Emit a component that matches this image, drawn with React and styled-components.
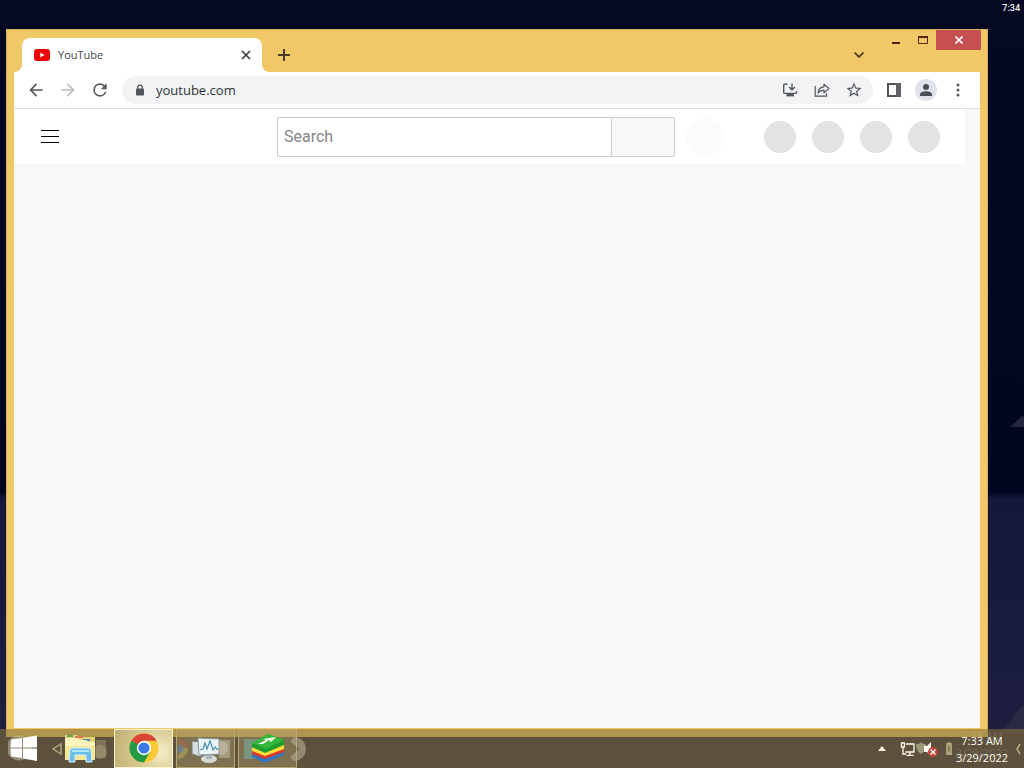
import React from "react";
import styled, { createGlobalStyle } from "styled-components";

const GlobalStyle = createGlobalStyle`
  * { box-sizing: border-box; }
  body { margin: 0; font-family: "Open Sans", "Noto Sans", sans-serif; }
  button, input { font: inherit; color: inherit; }
  svg { display: block; flex: none; }
`;

const Desktop = styled.div`
  min-height: 100vh;
  display: flex;
  flex-direction: column;
  background: linear-gradient(#050922 0, #02061f 55%, #02051e 64%, #15183a 65%, #1a1c3f 85%, #20213f 100%);
  position: relative;
`;

const Shard = styled.svg`
  position: absolute;
  right: 0;
  top: ${(p) => p.$top};
`;

const StatusBar = styled.header`
  height: 29px;
  display: flex;
  justify-content: flex-end;
  padding: 2px 4px 0;
  color: #f3f4f8;
  font: 500 9px/12px Roboto, sans-serif;
`;

const BrowserWindow = styled.main`
  flex: 1;
  display: flex;
  flex-direction: column;
  margin: 0 36px 0 6px;
  padding: 0 7px 9px;
  background: #f0c868;
  border: 1px solid #d6b05b;
  border-bottom: 0;
  position: relative;
`;

const TitleBar = styled.div`
  height: 42px;
  display: flex;
  align-items: flex-end;
  margin-right: -1px;
  padding-left: 8px;
`;

const Tab = styled.div`
  width: 240px;
  height: 34px;
  display: flex;
  align-items: center;
  padding: 0 8px 0 12px;
  gap: 8px;
  border-radius: 8px 8px 0 0;
  background: #fff;
  color: #45474a;
  font-size: 11px;
  line-height: 16px;
  position: relative;

  &::before, &::after {
    content: "";
    position: absolute;
    bottom: 0;
    width: 8px;
    height: 8px;
  }
  &::before { left: -8px; background: radial-gradient(circle at 0 0, transparent 8px, #fff 8px); }
  &::after { right: -8px; background: radial-gradient(circle at 100% 0, transparent 8px, #fff 8px); }
`;

const TabTitle = styled.span`
  flex: 1;
`;

const IconButton = styled.button`
  width: ${(p) => p.$w || 28}px;
  height: ${(p) => p.$h || 28}px;
  display: flex;
  flex: none;
  align-items: center;
  justify-content: center;
  border: 0;
  padding: 0;
  border-radius: 50%;
  background: none;
  color: ${(p) => p.$color || "#55585c"};
`;

const NewTab = styled(IconButton)`
  margin-left: 8px;
`;

const WindowControls = styled.div`
  align-self: flex-start;
  display: flex;
  align-items: flex-start;
  margin-left: auto;
`;

const TabSearch = styled(IconButton)`
  margin: 11px 9px 0 0;
`;

const ControlButton = styled(IconButton)`
  border-radius: 0;
  background: ${(p) => p.$bg || "none"};
`;

const Toolbar = styled.div`
  display: flex;
  align-items: center;
  height: 37px;
  gap: 4px;
  padding: 0 8px;
  background: #fff;
  border-bottom: 1px solid #dcdee1;
`;

const AddressBar = styled.div`
  flex: 1;
  min-width: 0;
  height: 28px;
  display: flex;
  align-items: center;
  gap: 4px;
  margin: 0 3px 0 4px;
  padding: 0 5px 0 13px;
  border-radius: 14px;
  background: #f1f3f4;
`;

const AddressInput = styled.input`
  flex: 1;
  min-width: 0;
  margin-left: 7px;
  padding: 0;
  border: 0;
  outline: 0;
  background: none;
  color: #303236;
  font-size: 13px;
  line-height: 20px;
`;

const Avatar = styled(IconButton)`
  background: #dfe2ea;
  background-clip: content-box;
  padding: 3px;
`;

const Page = styled.section`
  flex: 1;
  padding-right: 15px;
  background: #f8f8f8;
`;

const Masthead = styled.div`
  display: grid;
  grid-template-columns: 236px 1fr auto;
  align-items: center;
  height: 55px;
  padding: 0 25px 0 27px;
  background: #fff;
`;

const Burger = styled(IconButton)`
  width: 18px;
  color: #030303;
`;

const SearchForm = styled.form`
  display: flex;
  align-items: center;
  min-width: 0;
  margin-right: 40px;
`;

const SearchInput = styled.input`
  flex: 1;
  min-width: 0;
  height: 40px;
  padding: 0 6px;
  border: 1px solid #c9c9c9;
  border-right: 0;
  border-radius: 2px 0 0 2px;
  outline: 0;
  background: #fff;
  font: 16px/24px Roboto, sans-serif;
  &::placeholder { color: #858585; opacity: 1; }
`;

const SearchButton = styled.button`
  width: 64px;
  height: 40px;
  border: 1px solid #cdcdcd;
  border-radius: 0 2px 2px 0;
  background: #f8f8f8;
`;

const VoiceButton = styled(IconButton)`
  margin-left: 11px;
  background: #fbfbfb;
`;

const Placeholders = styled.div`
  display: flex;
  gap: 16px;
`;

const Dot = styled.span`
  width: 32px;
  height: 32px;
  border-radius: 50%;
  background: #e3e3e3;
`;

const Taskbar = styled.footer`
  height: 39px;
  display: flex;
  align-items: center;
  margin-top: -8px;
  padding: 0 0 0 8px;
  background: rgba(135, 115, 62, 0.6);
  position: relative;
`;

const TaskApps = styled.div`
  display: flex;
  align-items: center;
  gap: 3px;
  margin-left: 6px;
`;

const TaskButton = styled.button`
  width: ${(p) => p.$w || 59}px;
  height: 39px;
  display: flex;
  align-items: center;
  padding: 0 0 2px;
  border: ${(p) => (p.$plain ? "0" : `1px solid ${p.$active ? "#fdf6d2" : "#b9a873"}`)};
  background: ${(p) =>
    p.$active
      ? "radial-gradient(circle at 80% 60%, #f6edc8, #d8c98f 50%, #bfae74)"
      : p.$plain
        ? "none"
        : "rgba(180, 160, 105, 0.4)"};
`;

const Overflow = styled.svg`
  margin-left: -7px;
  position: relative;
`;

const Tray = styled.div`
  display: flex;
  align-items: center;
  margin-left: auto;
`;

const TrayIcons = styled.div`
  display: flex;
  align-items: center;
  margin-left: 13px;
`;

const Clock = styled.time`
  width: 60px;
  color: #fffdf2;
  font-size: 11px;
  line-height: 17px;
  padding-top: 1px;
  text-align: center;
  white-space: nowrap;
  text-shadow: 0 -5px 0 rgba(225, 215, 180, 0.2);
`;

const Mat = ({ d, size = 20 }) => (
  <svg width={size} height={size} viewBox="0 0 24 24" fill="currentColor" aria-hidden="true">
    <path d={d} />
  </svg>
);

const BACK = "M20 11H7.8l5.6-5.6L12 4l-8 8 8 8 1.4-1.4L7.8 13H20z";
const FORWARD = "M4 11h12.2l-5.6-5.6L12 4l8 8-8 8-1.4-1.4 5.6-5.6H4z";
const RELOAD =
  "M17.65 6.35A7.95 7.95 0 0 0 12 4a8 8 0 1 0 7.73 10h-2.08A6 6 0 1 1 12 6c1.66 0 3.14.69 4.22 1.78L13 11h7V4z";
const STAR =
  "M22 9.24l-7.19-.62L12 2 9.19 8.63 2 9.24l5.46 4.73L5.82 21 12 17.27 18.18 21l-1.63-7.03zM12 15.4l-3.76 2.27 1-4.28-3.32-2.88 4.38-.38L12 6.1l1.71 4.04 4.38.38-3.32 2.88 1 4.28z";

const YouTubeIcon = () => (
  <svg width="16" height="16" viewBox="0 0 16 16" aria-hidden="true">
    <rect y="2" width="16" height="12" rx="3" fill="#f00505" />
    <path d="M6.3 5.6v4.800L10.500 8z" fill="#fff" />
  </svg>
);

const LockIcon = () => (
  <svg width="10" height="12" viewBox="0 0 10 12" aria-hidden="true">
    <path d="M2.7 5V3.400a2.300 2.300 0 0 1 4.600 0V5" fill="none" stroke="#54575a" strokeWidth="1.300" />
    <rect x="1" y="4.500" width="8" height="7" rx="1" fill="#54575a" />
  </svg>
);

const InstallIcon = () => (
  <svg width="16" height="16" viewBox="0 0 16 16" fill="none" stroke="currentColor" strokeWidth="1.400" aria-hidden="true">
    <path d="M5.500 2.200H2.700a1 1 0 0 0-1 1v7.200a1 1 0 0 0 1 1h10.800a1 1 0 0 0 1-1V9M10 1.500v6M7.200 5.100 10 8l2.800-2.900" />
    <path d="M4.500 13h7.500" strokeWidth="2.800" />
  </svg>
);

const ShareIcon = () => (
  <svg width="16" height="16" viewBox="0 0 16 16" fill="none" stroke="currentColor" strokeWidth="1.200" aria-hidden="true">
    <path d="M1.200 4v10.200h11.300v-3" />
    <path d="M4 11c.4-4 2.400-6 6-6.200V2.200L15 6.500l-5 4.300V8.200C7.300 8.200 5.500 9 4 11z" strokeLinejoin="round" />
  </svg>
);

const PanelIcon = () => (
  <svg width="14" height="14" viewBox="0 0 14 14" aria-hidden="true">
    <rect x="1" y="1" width="12" height="12" fill="none" stroke="#525457" strokeWidth="2" />
    <path d="M9 0h5v14H9z" fill="#5f6164" />
  </svg>
);

const PersonIcon = () => (
  <svg width="12" height="12" viewBox="0 0 12 12" fill="#4b4f5b" aria-hidden="true">
    <circle cx="6" cy="3" r="3" />
    <path d="M0 12v-1.500C0 8.300 3 7.300 6 7.300s6 1 6 3.200V12z" />
  </svg>
);

const StartIcon = () => (
  <svg width="30" height="28" viewBox="0 0 30 28" aria-hidden="true">
    <circle cx="11" cy="14" r="12.500" fill="#cfc7ae" opacity=".5" />
    <path d="M3 5.500 14 4v9.500H2.500zM15 3.800 29 1.500v12H15zM2.500 14.500H14V24L3 22.500zM15 14.500h14V27l-14-2.500z" fill="#fff" />
  </svg>
);

const FolderIcon = () => (
  <svg width="50" height="32" viewBox="0 0 50 32" aria-hidden="true">
    <path d="M34 8h10v18H34z" fill="#b7a879" opacity=".4" />
    <circle cx="38" cy="20" r="7" fill="#c1b58c" opacity=".35" />
    <path d="M3 3h12l2 2h16v22H3z" fill="#e6d277" />
    <path d="M5 3h6v2H5z" fill="#5aa75b" />
    <path d="M13 4h8v2h-8z" fill="#d87a55" />
    <path d="M21 7h7v2h-7z" fill="#498abd" />
    <path d="M3 6h12l3 2h6l3 2h6v18H3z" fill="#fdf4bd" />
    <path d="M3 14h30v14H3z" fill="#f6e797" />
    <path d="M7 30 8 18q0-2 3-2h15q3 0 3 2l1 12h-6v-7H13v7z" fill="#6cbde9" stroke="#d6f2fb" />
    <path d="M10 19h17" stroke="#b8e7fa" strokeWidth="2" />
  </svg>
);

const ChromeIcon = () => (
  <svg width="57" height="36" viewBox="0 0 57 36" aria-hidden="true">
    <circle cx="29" cy="18" r="14.500" fill="#fbc934" />
    <path d="M29 18 16.400 10.750A14.500 14.500 0 0 0 29 32.500l6.300-10.900z" fill="#249a45" />
    <path d="M29 18 16.400 10.750a14.500 14.500 0 0 1 25.200 0H29z" fill="#db4437" />
    <path d="m16.400 10.750 6.300 10.900L29 18z" fill="#249a45" />
    <circle cx="29" cy="18" r="7.200" fill="#fff" />
    <circle cx="29" cy="18" r="5.600" fill="#3a7be5" />
  </svg>
);

const MonitorIcon = () => (
  <svg width="57" height="36" viewBox="0 0 57 36" aria-hidden="true">
    <path d="M0 8a11 11 0 0 1 11 10H4z" fill="#c66b4d" opacity=".35" />
    <path d="M0 29a11 11 0 0 0 11-11H5z" fill="#c3b259" opacity=".5" />
    <circle cx="3" cy="19" r="4" fill="#5986b0" opacity=".5" />
    <path d="M42 10h11v18H42z" fill="#d3cdb7" opacity=".45" />
    <circle cx="44" cy="18" r="7" fill="#d8d3c3" opacity=".4" />
    <path d="m15 11 9 1v15l-9-3z" fill="#d7dddd" stroke="#737a7a" />
    <ellipse cx="32" cy="29" rx="8" ry="4" fill="#d5dad6" />
    <path d="M29 24h6v5h-6z" fill="#a9b4b6" />
    <path d="m21 8 21 1v15l-20 1z" fill="#edf4f7" stroke="#899aa3" />
    <path d="m23 20 3-1 2-6 2 6 3-8 3 9 2-3 3 3" fill="none" stroke="#438fae" strokeWidth="1.200" />
  </svg>
);

const StackIcon = () => (
  <svg width="57" height="36" viewBox="0 0 57 36" aria-hidden="true">
    <path d="M5 9h14v20H5z" fill="#76a99a" opacity=".65" />
    <path d="m13 24 19-8 13 5v4l-19 8-13-6z" fill="#3277bd" />
    <path d="m13 21 19-8 13 5v4l-19 7-13-5z" fill="#dc3529" />
    <path d="m13 18 19-8 13 5v4l-19 7-13-5z" fill="#ffdc38" />
    <path d="m13 13 16-9 16 6v5l-19 8-13-6z" fill="#1c9d2d" />
    <path d="m13 13 16-9 16 6-18 9z" fill="#35b739" />
    <path d="m19 14 8-4-3-1 13-2-5 5-2-2-6 4z" fill="#f3faef" />
  </svg>
);

const Caret = () => (
  <svg width="8" height="5" viewBox="0 0 8 5" aria-hidden="true">
    <path d="M0 5 4 0l4 5z" fill="#fffbe9" />
  </svg>
);

const NetworkIcon = () => (
  <svg width="16" height="16" viewBox="0 0 16 16" fill="none" stroke="#fffbea" strokeWidth="1.300" aria-hidden="true">
    <path d="M6 3h8v8H5.500M10 11v3M6.500 14.300h7M1.500 2h3v4h-3zM3 6v7h3" />
  </svg>
);

const SoundIcon = () => (
  <svg width="24" height="18" viewBox="0 0 24 18" aria-hidden="true">
    <path d="M0 4q4 0 5-2 1 2 5 2c0 5-2 8-5 10-3-2-5-5-5-10z" fill="#9d9877" />
    <path d="M8 6h3l4-4v14l-4-4H8z" fill="#fffdf2" />
    <circle cx="17" cy="12" r="5" fill="#bd4539" />
    <path d="m14.500 9.500 5 5m0-5-5 5" stroke="#fff0e9" strokeWidth="1.500" />
  </svg>
);

const BatteryIcon = () => (
  <svg width="6" height="13" viewBox="0 0 6 13" aria-hidden="true">
    <path d="M2 0h2v1h2v12H0V1h2z" fill="#aaa07a" />
    <path d="M2 4h2v6H2z" fill="#8b8159" />
  </svg>
);

const Echo = styled.div`
  display: flex;
  margin-left: 6px;
`;

export default function App() {
  return (
    <>
      <GlobalStyle />
      <Desktop>
        <Shard $top="415px" width="14" height="12" viewBox="0 0 14 12" aria-hidden="true">
          <path d="M0 12 12 1l2 1v10z" fill="#24263f" />
        </Shard>
        <Shard $top="700px" width="24" height="34" viewBox="0 0 24 34" aria-hidden="true">
          <path d="M0 34 24 4v30z" fill="#2b2a44" />
        </Shard>
        <StatusBar><time>7:34</time></StatusBar>
        <BrowserWindow>
          <TitleBar>
            <Tab>
              <YouTubeIcon />
              <TabTitle>YouTube</TabTitle>
              <IconButton $w={16} $h={16} $color="#3d3e40" aria-label="Close tab">
                <svg width="10" height="10" viewBox="0 0 10 10" stroke="currentColor" strokeWidth="1.700">
                  <path d="m1 1 8 8m0-8L1 9" />
                </svg>
              </IconButton>
            </Tab>
            <NewTab $h={34} $color="#443c26" aria-label="New tab">
              <svg width="12" height="12" viewBox="0 0 12 12" stroke="currentColor" strokeWidth="2">
                <path d="M6 0v12M0 6h12" />
              </svg>
            </NewTab>
            <WindowControls>
              <TabSearch $color="#55451f" aria-label="Search tabs">
                <svg width="10" height="6" viewBox="0 0 10 6" fill="none" stroke="currentColor" strokeWidth="1.800">
                  <path d="m.5.5 4.500 4.500L9.500.5" />
                </svg>
              </TabSearch>
              <ControlButton $w={27} $h={26} aria-label="Minimize">
                <svg width="8" height="2"><path d="M0 0h8v2H0z" fill="#54200f" /></svg>
              </ControlButton>
              <ControlButton $w={27} $h={20} aria-label="Maximize">
                <svg width="10" height="8"><path d="M.5 1h9v6.500h-9z" fill="none" stroke="#54270c" /><path d="M0 0h10v2H0z" fill="#54270c" /></svg>
              </ControlButton>
              <ControlButton $w={45} $h={20} $bg="#c75050" aria-label="Close window">
                <svg width="8" height="8" viewBox="0 0 8 8" stroke="#fff" strokeWidth="1.600"><path d="m.5.5 7 7m0-7-7 7" /></svg>
              </ControlButton>
            </WindowControls>
          </TitleBar>
          <Toolbar>
            <IconButton aria-label="Back"><Mat d={BACK} /></IconButton>
            <IconButton $color="#bcbdbf" aria-label="Forward"><Mat d={FORWARD} /></IconButton>
            <IconButton aria-label="Reload"><Mat d={RELOAD} /></IconButton>
            <AddressBar>
              <LockIcon />
              <AddressInput aria-label="Address" defaultValue="youtube.com" />
              <IconButton aria-label="Install"><InstallIcon /></IconButton>
              <IconButton aria-label="Share"><ShareIcon /></IconButton>
              <IconButton aria-label="Bookmark"><Mat d={STAR} size={18} /></IconButton>
            </AddressBar>
            <IconButton aria-label="Side panel"><PanelIcon /></IconButton>
            <Avatar aria-label="Profile"><PersonIcon /></Avatar>
            <IconButton aria-label="Menu">
              <svg width="4" height="14" viewBox="0 0 4 14" fill="currentColor">
                <circle cx="2" cy="2" r="1.500" /><circle cx="2" cy="7" r="1.500" /><circle cx="2" cy="12" r="1.500" />
              </svg>
            </IconButton>
          </Toolbar>
          <Page>
            <Masthead>
              <Burger aria-label="Guide">
                <svg width="18" height="13"><path d="M0 0h18v1H0zM0 6h18v1H0zM0 12h18v1H0z" fill="currentColor" /></svg>
              </Burger>
              <SearchForm onSubmit={(e) => e.preventDefault()}>
                <SearchInput aria-label="Search" placeholder="Search" />
                <SearchButton aria-label="Submit search" />
                <VoiceButton $w={38} $h={38} type="button" aria-label="Search with your voice" />
              </SearchForm>
              <Placeholders><Dot /><Dot /><Dot /><Dot /></Placeholders>
            </Masthead>
          </Page>
        </BrowserWindow>
        <Taskbar>
          <TaskButton $plain $w={30} aria-label="Start"><StartIcon /></TaskButton>
          <Echo>
            <svg width="18" height="12" viewBox="0 0 18 12" aria-hidden="true">
              <path d="M17 1v10L9 6z" fill="none" stroke="#b7a97e" strokeWidth="1.400" />
            </svg>
          </Echo>
          <TaskButton $plain $w={46} aria-label="File Explorer"><FolderIcon /></TaskButton>
          <TaskApps>
            <TaskButton $active aria-label="Google Chrome"><ChromeIcon /></TaskButton>
            <TaskButton aria-label="Task Manager"><MonitorIcon /></TaskButton>
            <TaskButton aria-label="BlueStacks"><StackIcon /></TaskButton>
          </TaskApps>
          <Overflow width="16" height="24" viewBox="0 0 16 24" aria-hidden="true">
            <path d="M4 0a12 12 0 0 1 0 24L0 20 9 12 0 4z" fill="#b6ac91" opacity=".6" />
          </Overflow>
          <Tray>
            <IconButton $w={10} aria-label="Show hidden icons"><Caret /></IconButton>
            <TrayIcons>
              <NetworkIcon />
              <SoundIcon />
            </TrayIcons>
            <Echo><BatteryIcon /></Echo>
            <Clock>
              7:33 AM<br />3/29/2022
            </Clock>
            <svg width="12" height="12" viewBox="0 0 12 12" fill="none" stroke="#b5a981" strokeWidth="1.600" aria-hidden="true">
              <path d="M8 1 5 6l3 5" />
            </svg>
          </Tray>
        </Taskbar>
      </Desktop>
    </>
  );
}
